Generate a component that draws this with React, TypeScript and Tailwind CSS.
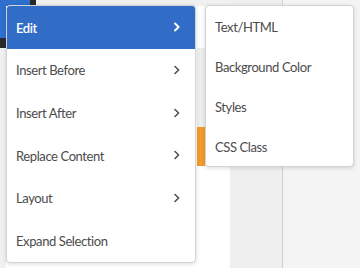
const mainItems = [
  { label: "Edit", sub: true, active: true },
  { label: "Insert Before", sub: true },
  { label: "Insert After", sub: true },
  { label: "Replace Content", sub: true },
  { label: "Layout", sub: true },
  { label: "Expand Selection", sub: false },
];

const subItems = ["Text/HTML", "Background Color", "Styles", "CSS Class"];

function Chevron({ white }: { white?: boolean }) {
  return (
    <svg width="6" height="10" viewBox="0 0 6 10" className="shrink-0">
      <path
        d="M1 1.5 L4.6 5 L1 8.5"
        fill="none"
        stroke={white ? "#ffffff" : "#4b4b4b"}
        strokeWidth={white ? 1.9 : 1.5}
        strokeLinecap="round"
        strokeLinejoin="round"
      />
    </svg>
  );
}

export default function App() {
  return (
    <div
      className="relative w-[360px] h-[268px] overflow-hidden bg-white"
      style={{ fontFamily: "Lato, 'Noto Sans', sans-serif" }}
    >
      {/* page behind the menus */}
      <div className="flex h-full">
        <div className="flex flex-col w-[230px]">
          <div className="flex h-[6px] bg-[#f1f1f1]">
            <div className="w-[30px] bg-[#2f6fd0]" />
            <div className="w-[6px] bg-[#2a2a2a]" />
          </div>
          <div className="flex h-[42px]">
            <div className="w-[6px] flex flex-col">
              <div className="h-[32px] bg-[#2f6fd0]" />
              <div className="flex-1 bg-[#2a2a2a]" />
            </div>
          </div>
          <div className="flex flex-1">
            <div className="w-[6px] bg-[#f1f1f1]" />
            <div className="w-[191px]" />
            <div className="flex flex-col w-[8px]">
              <div className="h-[79px] bg-[#eeeeee]" />
              <div className="h-[39px] bg-[#f39b2a]" />
            </div>
          </div>
        </div>
        <div className="w-[53px] bg-[#efefef] border-r border-[#cfcfcf]" />
        <div className="flex-1 bg-[#f4f4f4]" />
      </div>

      {/* main context menu */}
      <div className="absolute left-[6px] top-[5px] w-[190px] bg-white border border-[#d3d3d3] rounded-[4px] shadow-[0_1px_4px_rgba(0,0,0,0.15)] overflow-hidden">
        {mainItems.map((item) => (
          <div
            key={item.label}
            className={
              item.active
                ? "flex items-center justify-between h-[42.7px] pl-[9px] pr-[15px] bg-[#316cc6] text-white text-[13px] font-semibold tracking-[-0.4px]"
                : "flex items-center justify-between h-[42.7px] pl-[9px] pr-[15px] text-[#4b4b4b] text-[13px] tracking-[-0.4px]"
            }
          >
            <span className="pt-[2px]">{item.label}</span>
            {item.sub && <Chevron white={item.active} />}
          </div>
        ))}
      </div>

      {/* submenu */}
      <div className="absolute left-[205px] top-[5px] w-[149px] bg-white border border-[#d3d3d3] rounded-[4px] shadow-[0_1px_4px_rgba(0,0,0,0.15)] overflow-hidden">
        {subItems.map((label) => (
          <div
            key={label}
            className="flex items-center h-[40px] pl-[9px] text-[#4b4b4b] text-[13px] tracking-[-0.4px]"
          >
            <span className="pt-[3px]">{label}</span>
          </div>
        ))}
      </div>
    </div>
  );
}
